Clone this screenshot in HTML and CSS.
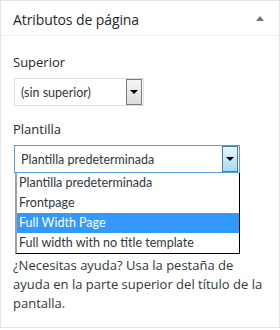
FILE: index.html
```html
<!DOCTYPE html>
<html lang="es">
<head>
  <meta charset="UTF-8" />
  <title>Atributos de página</title>
  <link rel="stylesheet" href="styles.css">
</head>
<body>
  <div class="postbox">
    <div class="hndle">
      <h2>Atributos de página</h2>
      <span class="toggle"></span>
    </div>
    <div class="inside">
      <p class="label">Superior</p>
      <div class="select select-parent">
        <span class="value">(sin superior)</span>
        <span class="arrow"></span>
      </div>

      <p class="label label-template">Plantilla</p>
      <div class="template-field">
        <div class="select select-open">
          <span class="value">Plantilla predeterminada</span>
          <span class="arrow"></span>
        </div>
        <ul class="options">
          <li>Plantilla predeterminada</li>
          <li>Frontpage</li>
          <li class="selected">Full Width Page</li>
          <li>Full width with no title template</li>
        </ul>
      </div>

      <p class="help">¿Necesitas ayuda? Usa la pestaña de ayuda en la parte superior del título de la pantalla.</p>
    </div>
  </div>
</body>
</html>
```

FILE: styles.css
```css
body {
  margin: 0;
  background: #fff;
  font-family: 'Open Sans', 'Noto Sans', sans-serif;
  color: #32373c;
}

.postbox {
  width: 280px;
  height: 328px;
  box-sizing: border-box;
  border: 1px solid #e5e5e5;
  background: #fff;
}

.hndle {
  height: 35px;
  border-bottom: 1px solid #eee;
  display: flex;
  align-items: center;
  justify-content: space-between;
  padding: 3px 15px 0 12px;
  box-sizing: border-box;
}

.hndle h2 {
  margin: 0;
  font-size: 14px;
  font-weight: 400;
  letter-spacing: -0.1px;
  color: #23282d;
}

.toggle {
  width: 0;
  height: 0;
  margin-top: -3px;
  border-left: 4px solid transparent;
  border-right: 4px solid transparent;
  border-bottom: 5px solid #72777c;
}

.inside {
  padding: 0 12px;
  font-size: 13px;
}

.label {
  margin: 17px 0 6px;
  line-height: 19px;
  color: #23282d;
}

.label-template {
  margin-top: 14px;
}

.select {
  display: flex;
  justify-content: space-between;
  align-items: stretch;
  height: 28px;
  box-sizing: border-box;
  border: 1px solid #ddd;
  padding: 0 0 0 6px;
  background: #fff;
  font-family: Lato, 'Open Sans', sans-serif;
  font-size: 12.5px;
}

.select .value {
  align-self: center;
  color: #32373c;
}

.select-parent {
  width: 130px;
  margin-left: 1px;
}

.select .arrow {
  width: 16px;
  box-sizing: border-box;
  border: 1px solid #7a7a7a;
  background: linear-gradient(#f4f4f4, #dcdcdc);
  margin-right: 1px;
  position: relative;
}

.select .arrow::after {
  content: '';
  position: absolute;
  left: 3px;
  top: 10px;
  border-left: 4px solid transparent;
  border-right: 4px solid transparent;
  border-top: 4px solid #000;
}

.template-field {
  position: relative;
  margin-left: 1px;
  width: 226px;
}

.select-open {
  border-color: #5b9dd9;
}

.select-open .arrow {
  border-color: #3c7fb1;
  background: linear-gradient(#eaf6fd, #a7d9f5);
}

.options {
  position: absolute;
  left: 1px;
  right: 0;
  top: 100%;
  margin: 0;
  padding: 0;
  list-style: none;
  background: #fff;
  border-left: 2px solid #a0a0a0;
  border-right: 1px solid #000;
  border-bottom: 1px solid #000;
  font-family: Lato, 'Open Sans', sans-serif;
  font-size: 12.5px;
  z-index: 2;
}

.options li {
  height: 20px;
  line-height: 20px;
  padding-left: 2px;
  color: #32373c;
  white-space: nowrap;
}

.options li.selected {
  background: #3399ff;
  color: #fff;
}

.help {
  margin: 83px 0 0;
  line-height: 19px;
  color: #32373c;
}
```
